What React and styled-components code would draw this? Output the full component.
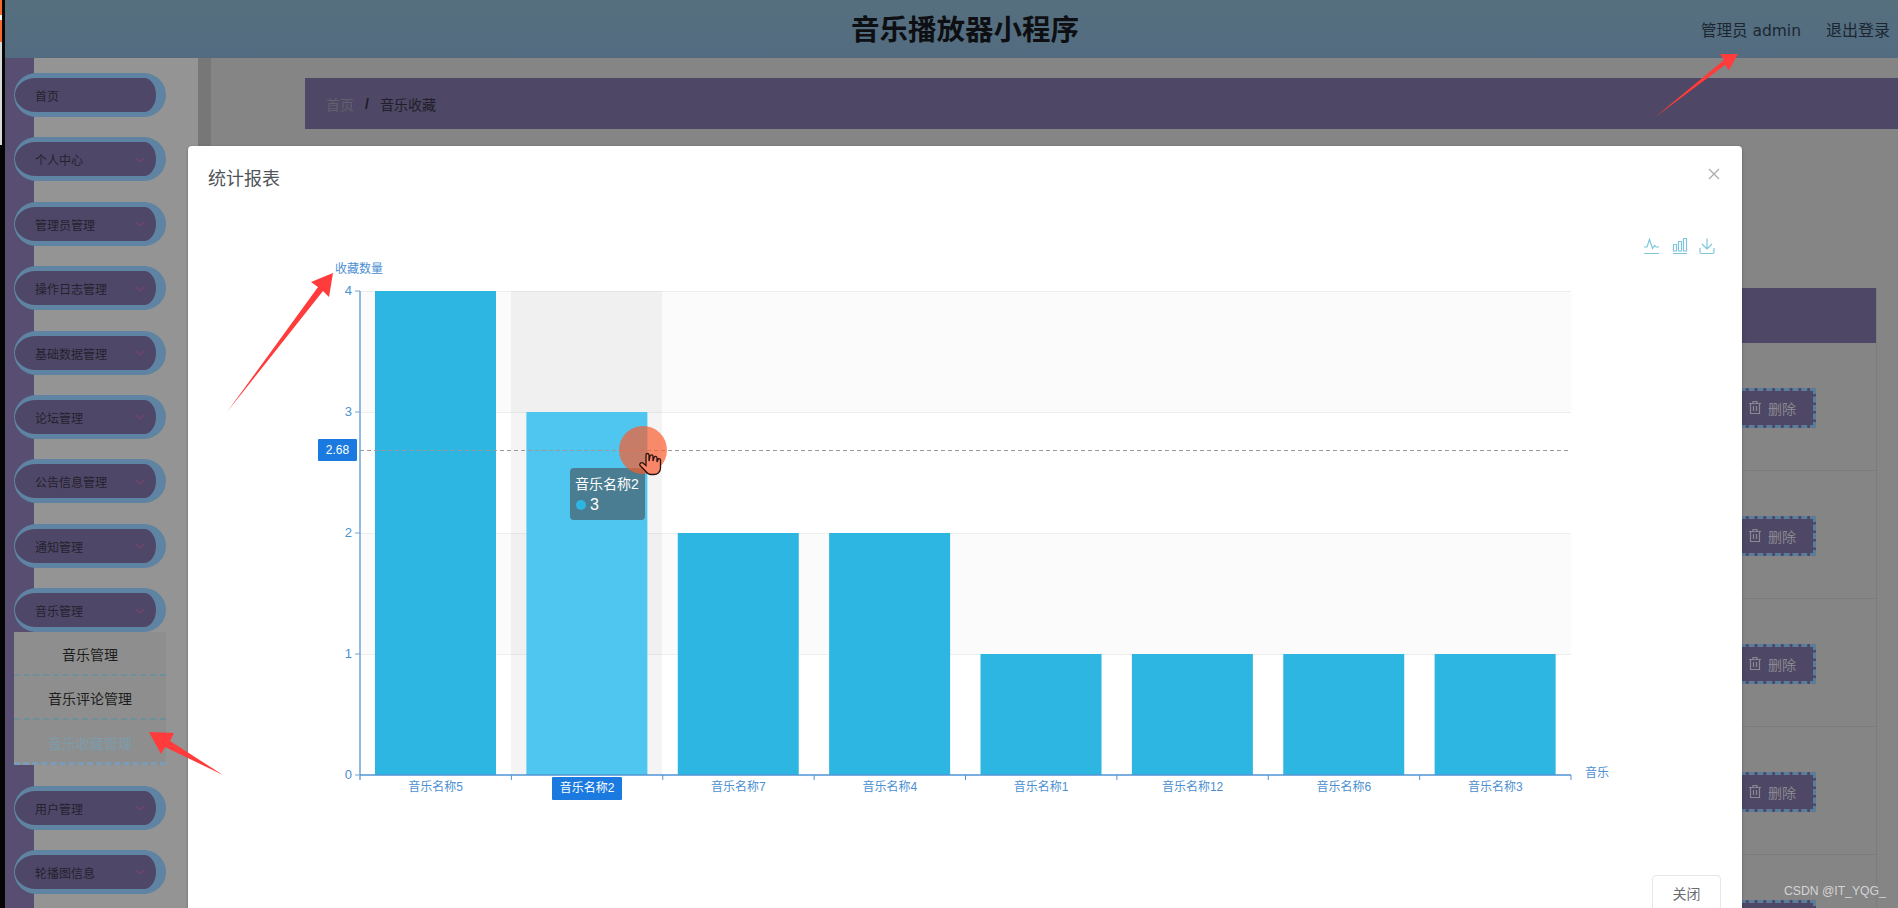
import styled, { createGlobalStyle } from "styled-components"

const GlobalStyle = createGlobalStyle`
    html, body {
        margin: 0;
        padding: 0;
        height: 908px;
        overflow: hidden;
        background: #858585;
    }
    * {
        box-sizing: border-box;
    }
    body, button {
        font-family: "Liberation Sans", "Noto Sans CJK SC", sans-serif;
    }
`

const Page = styled.div`
    display: flex;
    width: 1898px;
    height: 908px;
    position: relative;
    overflow: hidden;
`
const EdgeStrip = styled.div`
    width: 5px;
    flex: none;
    background:
        linear-gradient(180deg, #f46a2c 0 15px, #f5f5f5 15px 20px, #f46a2c 20px 42px, #d8d8d8 42px 145px, transparent 145px) 0 0 / 2px 100% no-repeat,
        #050505;
`
const Main = styled.div`
    flex: 1;
    display: flex;
    flex-direction: column;
    min-width: 0;
`
const Header = styled.header`
    height: 58px;
    flex: none;
    background: linear-gradient(180deg, #56707f 0%, #536b80 100%);
    display: flex;
    align-items: center;
    justify-content: flex-end;
    gap: 25px;
    padding: 0 8px 0 0;
    position: relative;
    font-size: 16px;
    color: #1a2733;
`
const Title = styled.h1`
    position: absolute;
    left: 846px;
    top: 12px;
    margin: 0;
    font-size: 28.5px;
    line-height: 36px;
    font-weight: 700;
    color: #0e0f12;
`
const UserName = styled.span`
    font-family: "DejaVu Sans", "Noto Sans CJK SC", sans-serif;
    font-size: 15.5px;
`
const Body = styled.div`
    flex: 1;
    display: flex;
    min-height: 0;
`
const Sidebar = styled.aside`
    width: 193px;
    flex: none;
    padding: 15px 0 0 9px;
    background: linear-gradient(90deg, #574e72 0 29px, #949494 29px);
`
const Divider = styled.div`
    width: 13px;
    flex: none;
    background: #777777;
`
const MenuGroup = styled.div`
    width: 152px;
    margin-bottom: 20.4px;
`
const MenuItem = styled.div`
    height: 44px;
    border-radius: 26px;
    border-style: solid;
    border-color: #5f83a3;
    border-width: 5px 10px 5px 1px;
    background: #4f4767;
    display: flex;
    align-items: center;
    justify-content: space-between;
    padding: 1px 11px 0 20px;
    font-size: 12px;
    color: #24222f;
`
const Chevron = styled.svg`
    width: 10px;
    height: 10px;
    fill: none;
    stroke: #76466a;
    stroke-width: 1.2;
`
const SubItem = styled.div`
    height: ${(prop) => (prop.$last ? "45px" : "44px")};
    display: flex;
    align-items: center;
    justify-content: center;
    padding-top: ${(prop) => (prop.$last ? "3px" : "1px")};
    font-size: 14px;
    background: #8e8e8e;
    color: ${(prop) => (prop.$active ? "#7c9cab" : "#1d1d20")};
    border-bottom: ${(prop) => (prop.$last ? "3px dashed #7a9cb8" : "2px dashed #6f9098")};
`
const Content = styled.main`
    flex: 1;
    min-width: 0;
    padding: 20px 0 0 94px;
`
const Breadcrumb = styled.nav`
    height: 51px;
    background: #4e4765;
    display: flex;
    align-items: center;
    gap: 9px;
    padding-left: 21px;
    font-size: 14px;
    color: #201f2a;
`
const CrumbLink = styled.span`
    color: #62606c;
`
const CrumbSlash = styled.span`
    font-weight: 700;
    color: #1d1b26;
    margin: 0 2px;
`
const TablePanel = styled.div`
    margin: 159px 21px 0 0;
    border-right: 1px solid #7c7c7c;
`
const TableHead = styled.div`
    height: 55px;
    background: #4e4765;
`
const TableRow = styled.div`
    height: 128px;
    display: flex;
    align-items: center;
    justify-content: flex-end;
    padding: 2px 60px 0 0;
    border-bottom: 1px solid #7c7c7c;
`
const DeleteButton = styled.button`
    width: 120px;
    height: 40px;
    border: 3px dashed #5b7d9c;
    background: #4e4765;
    display: flex;
    align-items: center;
    justify-content: flex-end;
    gap: 6px;
    padding: 0 17px 0 0;
    font-size: 14px;
    color: #8a8890;
`
const Overlay = styled.div`
    position: absolute;
    inset: 0;
    padding: 146px 156px 0 188px;
`
const Modal = styled.section`
    background: #ffffff;
    border-radius: 4px 4px 0 0;
    height: 800px;
    box-shadow: 0 1px 3px rgba(0, 0, 0, 0.3);
`
const ModalHead = styled.div`
    height: 54px;
    padding: 21px 20px 0 20px;
    display: flex;
    justify-content: space-between;
    align-items: flex-start;
`
const ModalTitle = styled.h2`
    margin: 0;
    font-size: 18px;
    line-height: 24px;
    font-weight: 400;
    color: #505458;
`
const CloseIcon = styled.svg`
    width: 12px;
    height: 12px;
    margin: 1px 2px 0 0;
    stroke: #a9a9ad;
    stroke-width: 1.2;
`
const ChartBox = styled.div`
    height: 620px;
`
const Footer = styled.div`
    display: flex;
    justify-content: flex-end;
    padding: 55px 21px 0 0;
`
const CloseButton = styled.button`
    width: 69px;
    height: 36px;
    background: #ffffff;
    border: 1px solid #e6e6e8;
    border-radius: 4px;
    font-size: 14px;
    color: #6c6c70;
`
const Watermark = styled.div`
    position: absolute;
    left: 1784px;
    top: 883px;
    font-size: 12.2px;
    line-height: 16px;
    color: #d4d4d4;
    white-space: nowrap;
`
const ArrowLayer = styled.svg`
    position: absolute;
    left: 0;
    top: 0;
    width: 1898px;
    height: 908px;
    pointer-events: none;
`
const AxisText = styled.text`
    font-size: ${(prop) => prop.$size || 12}px;
    fill: ${(prop) => prop.$fill || "#4c8fd0"};
    font-family: "Liberation Sans", "Noto Sans CJK SC", sans-serif;
`

const menus = ["首页", "个人中心", "管理员管理", "操作日志管理", "基础数据管理", "论坛管理", "公告信息管理", "通知管理", "音乐管理", "用户管理", "轮播图信息"]
const subMenus = ["音乐管理", "音乐评论管理", "音乐收藏管理"]
const bars = [
    { name: "音乐名称5", value: 4 },
    { name: "音乐名称2", value: 3 },
    { name: "音乐名称7", value: 2 },
    { name: "音乐名称4", value: 2 },
    { name: "音乐名称1", value: 1 },
    { name: "音乐名称12", value: 1 },
    { name: "音乐名称6", value: 1 },
    { name: "音乐名称3", value: 1 },
]

const axisLeft = 360
const axisRight = 1571
const axisBottom = 775
const unit = 121
const band = (axisRight - axisLeft) / bars.length

function Chart() {
    return (
        <svg width="1554" height="620" viewBox="188 200 1554 620">
            {/* split areas */}
            <rect x={axisLeft} y={291} width={axisRight - axisLeft} height={121} fill="#fbfbfc" />
            <rect x={axisLeft} y={533} width={axisRight - axisLeft} height={121} fill="#fbfbfc" />
            {[291, 412, 533, 654].map((y) => (
                <line key={y} x1={axisLeft} x2={axisRight} y1={y + 0.5} y2={y + 0.5} stroke="#eeeeee" />
            ))}
            {/* hovered category shadow */}
            <rect x={511} y={291} width={151} height={484} fill="#969696" opacity="0.1" />
            {bars.map((bar, i) => (
                <rect
                    key={bar.name}
                    x={axisLeft + band * i + 15}
                    y={axisBottom - bar.value * unit}
                    width={121}
                    height={bar.value * unit}
                    fill={i === 1 ? "#4fc6ef" : "#2db6e2"}
                />
            ))}
            {/* axes */}
            <line x1={axisLeft} x2={axisLeft} y1={291} y2={780} stroke="#6fa3d6" strokeWidth="1.5" />
            <line x1={axisLeft} x2={axisRight} y1={775} y2={775} stroke="#4f94d4" strokeWidth="1.5" />
            {[0, 1, 2, 3, 4].map((v) => (
                <g key={v}>
                    <line x1={355} x2={axisLeft} y1={axisBottom - v * unit} y2={axisBottom - v * unit} stroke="#6fa3d6" />
                    <AxisText x={352} y={axisBottom - v * unit + 4} textAnchor="end" $size={13}>{v}</AxisText>
                </g>
            ))}
            {bars.map((bar, i) => (
                <line key={i} x1={axisLeft + band * (i + 1)} x2={axisLeft + band * (i + 1)} y1={775} y2={780} stroke="#4f94d4" />
            ))}
            {bars.map((bar, i) =>
                i === 1 ? null : (
                    <AxisText key={bar.name} x={axisLeft + band * (i + 0.5)} y={791} textAnchor="middle">{bar.name}</AxisText>
                )
            )}
            <AxisText x={335} y={273}>收藏数量</AxisText>
            <AxisText x={1585} y={777}>音乐</AxisText>

            {/* cross pointer */}
            <line x1={axisLeft} x2={axisRight} y1={450.5} y2={450.5} stroke="#9a9a9a" strokeDasharray="4 3" />
            <rect x={318} y={439} width={39} height={22} rx="1" fill="#1a7ae0" />
            <AxisText x={337.5} y={454} textAnchor="middle" $fill="#ffffff">2.68</AxisText>
            <rect x={552} y={777} width={70} height={23} rx="1" fill="#1a7ae0" />
            <AxisText x={587} y={792} textAnchor="middle" $fill="#ffffff">音乐名称2</AxisText>

            {/* tooltip */}
            <rect x={570} y={468} width={75} height={52} rx="4" fill="#4a7d92" />
            <AxisText x={575} y={489} $size={14} $fill="#ffffff">音乐名称2</AxisText>
            <circle cx={581} cy={505} r={5} fill="#2db6e2" />
            <AxisText x={590} y={510} $size={16} $fill="#ffffff">3</AxisText>

            {/* mouse highlight */}
            <circle cx={643} cy={450} r={24} fill="#f95c2e" opacity="0.7" />
            <path
                d="M646 455 C646 453 649 453 649 455 V461 L650 456 C650.5 454.5 653 454.5 653 456 V461 L654 457.5 C654.5 456 657 456 657 458 V462 L658 459.5 C658.5 458 660.5 458.5 660.5 460 V468 C660.5 472 657.5 474.5 654 474.5 H651 C648 474.5 646 472 644.5 470 L640 465.5 C639 464 641 462 643 463 L646 465.5 Z"
                fill="#f98668"
                stroke="#2a1410"
                strokeWidth="1.3"
            />

            {/* toolbox */}
            <g fill="none" stroke="#7fc6dc" strokeWidth="1.2" transform="translate(-1 1)">
                <path d="M1645 252.5 H1660 M1645 246 H1648 L1650.5 238.5 L1653.5 247.5 L1655.5 244.5 L1657 246 H1660" />
                <path d="M1674 252.5 H1688 M1674.5 243.5 H1677.5 V250 H1674.5 Z M1679.5 240.5 H1682.5 V250 H1679.5 Z M1684.5 237.5 H1687.5 V250 H1684.5 Z" />
                <path d="M1708 237.5 V248 M1703 243 L1708 248 L1713 243 M1701 247 V251 Q1701 252.5 1702.5 252.5 H1713.5 Q1715 252.5 1715 251 V247" />
            </g>
        </svg>
    )
}

export default function App() {
    return (
        <Page>
            <GlobalStyle />
            <EdgeStrip />
            <Main>
                <Header>
                    <Title>音乐播放器小程序</Title>
                    <UserName>管理员 admin</UserName>
                    <span>退出登录</span>
                </Header>
                <Body>
                    <Sidebar>
                        {menus.map((menu, i) => (
                            <MenuGroup key={menu}>
                                <MenuItem>
                                    {menu}
                                    {i > 0 && (
                                        <Chevron viewBox="0 0 10 10">
                                            <path d="M1 3 L5 7 L9 3" />
                                        </Chevron>
                                    )}
                                </MenuItem>
                                {menu === "音乐管理" &&
                                    subMenus.map((sub, j) => (
                                        <SubItem key={sub} $active={j === 2} $last={j === 2}>{sub}</SubItem>
                                    ))}
                            </MenuGroup>
                        ))}
                    </Sidebar>
                    <Divider />
                    <Content>
                        <Breadcrumb>
                            <CrumbLink>首页</CrumbLink>
                            <CrumbSlash>/</CrumbSlash>
                            <span>音乐收藏</span>
                        </Breadcrumb>
                        <TablePanel>
                            <TableHead />
                            {[0, 1, 2, 3, 4].map((row) => (
                                <TableRow key={row}>
                                    {/* the fifth row's button only shows its top edge above the fold */}
                                    <DeleteButton>
                                        {row < 4 && (
                                            <>
                                                <svg width="14" height="15" viewBox="0 0 14 15" fill="none" stroke="#8a8890" strokeWidth="1.2">
                                                    <path d="M1 3.5 H13 M5 3.5 V1.5 H9 V3.5 M2.5 3.5 V13.5 H11.5 V3.5 M5.5 6 V11 M8.5 6 V11" />
                                                </svg>
                                                删除
                                            </>
                                        )}
                                    </DeleteButton>
                                </TableRow>
                            ))}
                        </TablePanel>
                    </Content>
                </Body>
            </Main>
            <Overlay>
                <Modal>
                    <ModalHead>
                        <ModalTitle>统计报表</ModalTitle>
                        <CloseIcon viewBox="0 0 12 12">
                            <path d="M1 1 L11 11 M11 1 L1 11" />
                        </CloseIcon>
                    </ModalHead>
                    <ChartBox>
                        <Chart />
                    </ChartBox>
                    <Footer>
                        <CloseButton>关闭</CloseButton>
                    </Footer>
                </Modal>
            </Overlay>
            <Watermark>CSDN @IT_YQG_</Watermark>
            <ArrowLayer viewBox="0 0 1898 908">
                <g fill="#ff3b3b">
                    <path d="M1654 118 L1724 60 L1720 54 L1738 54 L1729 70 L1725 65 Z" />
                    <path d="M227 412 L318 287 L311 282 L333 273 L329 297 L323 291 Z" />
                    <path d="M223 775 L165 747 L161 754 L149 732 L174 733 L170 741 Z" />
                </g>
            </ArrowLayer>
        </Page>
    )
}
